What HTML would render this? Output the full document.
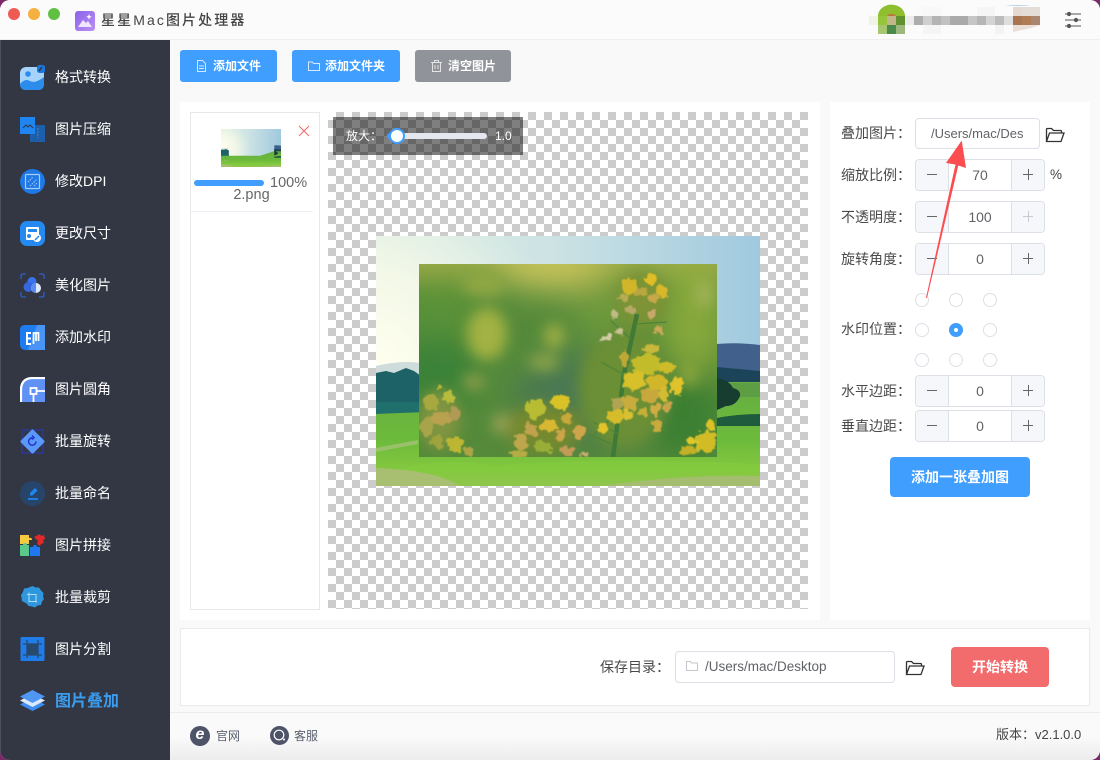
<!DOCTYPE html>
<html lang="zh"><head><meta charset="utf-8"><title>星星Mac图片处理器</title>
<style>
*{box-sizing:border-box;margin:0;padding:0}
html,body{width:1100px;height:760px;overflow:hidden;background:#7a2a6a}
body{font-family:"Liberation Sans","Noto Sans CJK SC",sans-serif;position:relative}
.a{position:absolute}
#win{position:absolute;left:0;top:0;width:1100px;height:760px;background:#f9f9f9;border-radius:10px;overflow:hidden}
#tb{left:0;top:0;width:1100px;height:40px;background:#fbfbfb;border-bottom:1px solid #efefef}
.dot{position:absolute;top:8px;width:12px;height:12px;border-radius:50%}
#side{left:0;top:40px;width:170px;height:720px;background:#333744}
.it{position:absolute;left:55px;font-size:14px;line-height:20px;color:#fff;white-space:nowrap}
.ic{position:absolute;left:20px;width:25px;height:25px}
.btn{position:absolute;top:50px;height:32px;border-radius:3px;background:#409eff;color:#fff;font-size:12px;font-weight:700;line-height:32px;white-space:nowrap}
.btn svg{position:absolute;top:10px;left:16px}
.btn span{position:absolute;top:0}
.lab{position:absolute;left:841px;font-size:14px;line-height:20px;color:#4a4a4a;white-space:nowrap}
.num{position:absolute;left:915px;width:130px;height:32px;border:1px solid #dcdfe6;border-radius:4px;background:#fff;font-size:14px;color:#606266;text-align:center;line-height:30px}
.num i{position:absolute;top:0;width:33px;height:30px;background:#f5f7fa;font-style:normal}
.num i.l{left:0;border-right:1px solid #dcdfe6;border-radius:3px 0 0 3px}
.num i.r{right:0;border-left:1px solid #dcdfe6;border-radius:0 3px 3px 0}
.num i:before{content:"";position:absolute;left:11px;top:14px;width:10px;height:1px;background:#666}
.num i.r:after{content:"";position:absolute;left:16px;top:9px;width:1px;height:11px;background:#666}
.num i.d:before,.num i.d:after{background:#c8cbd2}
.rd{position:absolute;width:14px;height:14px;border-radius:50%;border:1px solid #dcdfe6;background:#fff}
.rd.on{background:#409eff;border-color:#409eff}
.rd.on:after{content:"";position:absolute;left:4px;top:4px;width:4px;height:4px;border-radius:50%;background:#fff}
#chk{left:328px;top:112px;width:480px;height:497px;background-color:#fff;background-image:conic-gradient(#ccc 25%,#fff 0 50%,#ccc 0 75%,#fff 0);background-size:16px 16px}
</style></head><body>
<div id="win">
<div class="a" id="tb"></div>
<div class="dot" style="left:8px;background:#ee5b55"></div>
<div class="dot" style="left:28px;background:#f4b040"></div>
<div class="dot" style="left:48px;background:#5fc042"></div>
<svg class="a" style="left:75px;top:11px" width="20" height="20" viewBox="0 0 20 20"><defs><linearGradient id="lg" x1="0" y1="0" x2="1" y2="1"><stop offset="0" stop-color="#8a62ea"/><stop offset="1" stop-color="#bb90f3"/></linearGradient></defs><rect width="20" height="20" rx="3" fill="url(#lg)"/><path d="M3 16l5-7 3 3 2-2 4 6z" fill="#efe6fd"/><path d="M14 3l.8 2 2 .8-2 .8-.8 2-.8-2-2-.8 2-.8z" fill="#fff"/></svg>
<div class="a" style="left:101px;top:10px;font-size:14px;line-height:20px;font-weight:500;color:#444;letter-spacing:2.1px;white-space:nowrap">星星Mac图片处理器</div>
<svg class="a" style="left:868px;top:4px" width="190" height="34" viewBox="868 4 190 34">
<path d="M878 16a13 11 0 0 1 27 0z" fill="#8fbf2e"/><rect x="887" y="16" width="9" height="9" fill="#c2b78a"/><rect x="878" y="16" width="9" height="9" fill="#96c43a"/><rect x="896" y="16" width="9" height="9" fill="#62912f"/><rect x="878" y="25" width="9" height="9" fill="#a6c670"/><rect x="887" y="25" width="9" height="9" fill="#4c8a4c"/><rect x="896" y="25" width="9" height="9" fill="#9db87e"/><rect x="869" y="16" width="9" height="9" fill="#f0f3e6"/><path d="M887 16a5 4 0 0 1 9 0z" fill="#b97a3c"/>
<g>
<rect x="905" y="16" width="9" height="9" fill="#ececec"/><rect x="914" y="16" width="9" height="9" fill="#adadad"/><rect x="923" y="16" width="9" height="9" fill="#cfcfcf"/><rect x="932" y="16" width="9" height="9" fill="#b4b4b4"/><rect x="941" y="16" width="9" height="9" fill="#c2c2c2"/><rect x="950" y="16" width="18" height="9" fill="#aaa"/><rect x="968" y="16" width="9" height="9" fill="#c6c6c6"/><rect x="977" y="16" width="9" height="9" fill="#b6b6b6"/><rect x="986" y="16" width="9" height="9" fill="#d4d4d4"/><rect x="995" y="16" width="9" height="9" fill="#bcbcbc"/><rect x="1004" y="16" width="9" height="9" fill="#dedede"/>
<rect x="914" y="7" width="9" height="9" fill="#fafafa"/><rect x="923" y="7" width="18" height="9" fill="#f8f8f8"/><rect x="977" y="7" width="18" height="9" fill="#f5f5f5"/>
<rect x="923" y="25" width="18" height="9" fill="#f5f5f5"/><rect x="995" y="25" width="9" height="9" fill="#f3f3f3"/>
<rect x="1013" y="16" width="9" height="9" fill="#a9744f"/><rect x="1022" y="16" width="9" height="9" fill="#b07c55"/><rect x="1031" y="16" width="9" height="9" fill="#aa8570"/>
<rect x="1013" y="7" width="9" height="9" fill="#e4d8d0"/><rect x="1022" y="7" width="18" height="9" fill="#e4dcd6"/>
<path d="M1013 25h27l-9 3-18 4z" fill="#e9dfd8"/><path d="M1005 6q14-2 26 0z" fill="#b4d0e8"/>
</g></svg>
<svg class="a" style="left:1063px;top:11px" width="20" height="18" viewBox="0 0 20 18" fill="none" stroke="#555" stroke-width="1"><path d="M2 3h16M2 9h16M2 15h16"/><circle cx="6" cy="3" r="1.6" fill="#555"/><circle cx="13" cy="9" r="1.6" fill="#555"/><circle cx="6" cy="15" r="1.6" fill="#555"/></svg>

<div class="a" id="side"></div>
<div class="a" style="left:0;top:40px;width:1px;height:720px;background:#50505c"></div>

<svg class="ic" style="top:65px" viewBox="0 0 25 25"><rect y="2" width="24" height="23" rx="6" fill="#a6d3fb"/><circle cx="8" cy="9" r="2.8" fill="#2b8ceb"/><path d="M0 19q5-6 10-3t14-4v7q0 6-6 6H6q-6 0-6-6z" fill="#2b8ceb"/><rect x="17" y="0" width="8" height="8" rx="2.5" fill="#1a78dc"/><path d="M19 6l3-4" stroke="#333744" stroke-width="1.6"/></svg>
<svg class="ic" style="top:117px" viewBox="0 0 25 25"><rect x="10" y="8" width="15" height="17" fill="#1c5fa8"/><rect width="15" height="17" fill="#1f85f0"/><path d="M3 11l3-3 2 2 2-2 3 3" stroke="#333744" stroke-width="1" fill="none"/><path d="M18 11v10" stroke="#2f74bd" stroke-width="2" stroke-dasharray="2 1"/></svg>
<svg class="ic" style="top:169px" viewBox="0 0 25 25"><circle cx="12.500" cy="12.500" r="12.500" fill="#1e78e6"/><rect x="5.500" y="5.500" width="14" height="14" rx="1" fill="none" stroke="#a5cdf8" stroke-width="1.200"/><path d="M8 13l5-5M10 17l7-7M14 17l3-3" stroke="#a5cdf8" stroke-width="1" stroke-dasharray="1.500 1"/></svg>
<svg class="ic" style="top:221px" viewBox="0 0 25 25"><rect width="25" height="25" rx="7" fill="#2489f0"/><rect x="6" y="6" width="13" height="13" rx="1" fill="#fff"/><rect x="8" y="8" width="9" height="3" fill="#2489f0"/><circle cx="9" cy="15" r="2" fill="#2489f0"/><circle cx="17" cy="17" r="4" fill="#fff"/><path d="M15 19l4-4" stroke="#2489f0" stroke-width="1.500"/></svg>
<svg class="ic" style="top:273px" viewBox="0 0 25 25"><path d="M1 6V3q0-2 2-2h3M19 1h3q2 0 2 2v3M24 19v3q0 2-2 2h-3M6 24H3q-2 0-2-2v-3" fill="none" stroke="#2f5fd0" stroke-width="1.300"/><circle cx="12" cy="8.500" r="4.500" fill="#3a72ee"/><circle cx="8.500" cy="14" r="5" fill="#3566dc"/><circle cx="16" cy="15" r="5" fill="#dfe9fb"/><path d="M16 10a5 5 0 0 0 0 10z" fill="#5b8df0"/></svg>
<svg class="ic" style="top:325px" viewBox="0 0 25 25"><path d="M5 0h20v19q0 6-6 6H6q-6 0-6-6V5q0-5 5-5z" fill="#1f7cf0"/><path d="M17 0h8v25H8z" fill="#4a94f5"/><path d="M11 8H7v11h4M7 13.500h4" stroke="#fff" stroke-width="2" fill="none"/><path d="M13.500 19V8h5v8M16 8v8" stroke="#fff" stroke-width="1.700" fill="none"/></svg>
<svg class="ic" style="top:377px" viewBox="0 0 25 25"><path d="M0 25V13Q0 0 13 0h12v25z" fill="#5f92f4"/><path d="M1 25V13Q1 1 13 1h12" fill="none" stroke="#fff" stroke-width="2.200"/><rect x="10.500" y="11" width="6" height="6" fill="#5f92f4" stroke="#fff" stroke-width="1.800"/><path d="M17 14h8M13.500 17v8" stroke="#fff" stroke-width="1.800"/></svg>
<svg class="ic" style="top:429px" viewBox="0 0 25 25"><rect x="2" y="1" width="21" height="23" fill="none" stroke="#2a3bd8" stroke-width=".8"/><path d="M12.500 2L23 12.500 12.500 23 2 12.500z" fill="#5a98fb" stroke="#5a98fb" stroke-width="3" stroke-linejoin="round"/><path d="M16 12.500a3.700 3.700 0 1 1-3.700-3.700M12 6.500l2 2.300-2.300 1.700" fill="none" stroke="#2136c8" stroke-width="1.500"/></svg>
<svg class="ic" style="top:481px" viewBox="0 0 25 25"><circle cx="12.500" cy="12.500" r="12.500" fill="#27456b"/><path d="M8 18h10" stroke="#1f85f0" stroke-width="1.800"/><path d="M10 14.500V12l5-5 2.500 2.500-5 5z" fill="#1f85f0"/></svg>
<svg class="ic" style="top:533px" viewBox="0 0 25 25"><path d="M0 2h9v3a2 2 0 0 1 3 2h-3v4H0z" fill="#f7cb40"/><path d="M0 12h3a2 2 0 0 1 4 0h2v11H1q-1 0-1-1z" fill="#5bc98a"/><path d="M10 14h3a2 2 0 0 1 4 0h3v9h-10z" fill="#1f78f0"/><path d="M14 4l6-3 1 2 3-1 1 4-2 1 1 3-3 1-1 2-3-2 1-3-2-2z" fill="#e02a2a"/></svg>
<svg class="ic" style="top:585px" viewBox="0 0 25 25"><path d="M12.500 1l3 1.500 3.500 0 2 3 2.500 2.500-.5 3.500 1 2.500-2 2.500-1 3.500-3.500.5-2.500 2-3-1-3.500-.5-2-2.500L2 16l-.5-3.500L1 10l2-3 1-3.500 3.500-.5z" fill="#2f97de"/><path d="M9 7.500v9h8M7 9.500h9v8" fill="none" stroke="#b5dcf6" stroke-width="1"/></svg>
<svg class="ic" style="top:637px" viewBox="0 0 25 25"><rect x=".5" width="24" height="24" rx="1" fill="#1f7ce8"/><path d="M7 3v18M18 3v18M3 7h19M3 18h19" stroke="#27496e" stroke-width="1.300"/><rect x="7" y="7" width="11" height="11" fill="#27496e"/></svg>
<svg class="ic" style="top:689px" viewBox="0 0 25 25"><path d="M12.500 9L25 15.500 12.500 22 0 15.500z" fill="#3f8df0"/><path d="M12.500 5L25 11.500 12.500 18 0 11.500z" fill="#dce9fb"/><path d="M12.500 1L25 7.500 12.500 14 0 7.500z" fill="#4f97f3"/></svg>

<div class="it" style="top:67px">格式转换</div>
<div class="it" style="top:119px">图片压缩</div>
<div class="it" style="top:171px">修改DPI</div>
<div class="it" style="top:223px">更改尺寸</div>
<div class="it" style="top:275px">美化图片</div>
<div class="it" style="top:327px">添加水印</div>
<div class="it" style="top:379px">图片圆角</div>
<div class="it" style="top:431px">批量旋转</div>
<div class="it" style="top:483px">批量命名</div>
<div class="it" style="top:535px">图片拼接</div>
<div class="it" style="top:587px">批量裁剪</div>
<div class="it" style="top:639px">图片分割</div>
<div class="it" style="top:692px;font-size:16px;font-weight:700;color:#3b9df0">图片叠加</div>

<div class="btn" style="left:180px;width:97px"><svg width="11" height="12" viewBox="0 0 11 12" fill="none" stroke="#d5e8ff" stroke-width="1"><path d="M1.500.5h5l3 3v8h-8zM3 6h5M3 8.500h5"/></svg><span style="left:33px">添加文件</span></div>
<div class="btn" style="left:292px;width:108px"><svg width="12" height="12" viewBox="0 0 12 12" fill="none" stroke="#d5e8ff" stroke-width="1"><path d="M.5 2h4l1 1.500h6v7h-11z"/></svg><span style="left:33px">添加文件夹</span></div>
<div class="btn" style="left:415px;width:96px;background:#909399"><svg width="11" height="12" viewBox="0 0 11 12" fill="none" stroke="#e4e4e6" stroke-width="1"><path d="M0 2.500h11M3.500 2.500V.5h4v2M1.500 2.500v9h8v-9M4 5v4M7 5v4"/></svg><span style="left:33px">清空图片</span></div>

<div class="a" style="left:180px;top:102px;width:640px;height:518px;background:#fff"></div>
<div class="a" style="left:830px;top:102px;width:260px;height:518px;background:#fff"></div>
<div class="a" style="left:190px;top:112px;width:130px;height:498px;background:#fff;border:1px solid #e8e8e8"></div>

<svg class="a" style="left:221px;top:129px" width="60" height="38" viewBox="0 0 384 250" preserveAspectRatio="none"><use href="#land"/></svg>
<svg class="a" style="left:298px;top:125px" width="12" height="12" viewBox="0 0 12 12"><path d="M1 1l10 10M11 1L1 11" stroke="#f56c6c" stroke-width="1.100"/></svg>
<div class="a" style="left:194px;top:180px;width:70px;height:6px;border-radius:3px;background:#409eff"></div>
<div class="a" style="left:270px;top:175px;font-size:14.500px;line-height:16px;color:#666">100%</div>
<div class="a" style="left:191px;width:128px;top:187px;font-size:14.500px;line-height:17px;color:#666;text-align:center;padding-right:7px">2.png</div>
<div class="a" style="left:191px;top:211px;width:122px;height:1px;background:#ebeef5"></div>

<div class="a" id="chk"></div>
<svg class="a" style="left:376px;top:236px" width="384" height="250" viewBox="0 0 384 250">
<defs>
<linearGradient id="sky" x1="0" y1="0" x2="1" y2="0"><stop offset="0" stop-color="#dcefe4"/><stop offset=".45" stop-color="#cde3e4"/><stop offset="1" stop-color="#a0c9df"/></linearGradient>
<radialGradient id="sun" gradientUnits="userSpaceOnUse" cx="0" cy="130" r="190"><stop offset="0" stop-color="#fffff0"/><stop offset=".5" stop-color="#fbfbe8" stop-opacity=".75"/><stop offset="1" stop-color="#f0f6e8" stop-opacity="0"/></radialGradient>
<linearGradient id="gr" x1="0" y1="0" x2="0" y2="1"><stop offset="0" stop-color="#66ad42"/><stop offset=".55" stop-color="#6cba3c"/><stop offset=".85" stop-color="#84c83e"/><stop offset="1" stop-color="#a0bc60"/></linearGradient>
<filter id="b1" x="-40%" y="-40%" width="180%" height="180%"><feGaussianBlur stdDeviation="16"/></filter>
<filter id="b2" x="-40%" y="-40%" width="180%" height="180%"><feGaussianBlur stdDeviation="7"/></filter>
<filter id="fl" x="-5%" y="-5%" width="110%" height="110%"><feTurbulence type="fractalNoise" baseFrequency=".16" numOctaves="2" seed="4" result="n"/><feDisplacementMap in="SourceGraphic" in2="n" scale="9" xChannelSelector="R" yChannelSelector="G"/><feGaussianBlur stdDeviation=".5"/></filter>
<g id="land">
<rect width="384" height="250" fill="url(#sky)"/>
<rect width="384" height="250" fill="url(#sun)"/>
<path d="M0 130q25-6 45-3v20H0z" fill="#cfdcdc"/>
<path d="M341 108q20-2 43 1v40h-43z" fill="#41608c"/>
<path d="M341 131l43 4v14h-43z" fill="#1c4458"/>
<path d="M0 137l10-2 8 2 12-5 8 3 7 5 5-1v40H0z" fill="#1d6266"/>
<path d="M0 166h50v14H0z" fill="#1f6f6c"/>
<path d="M0 178l50-2h200l90-30h44v104H0z" fill="url(#gr)"/>
<path d="M341 147h43v14h-43z" fill="#5d9e44"/>
<path d="M341 182q20-4 43-4v12h-43z" fill="#1f5c3e"/>
<path d="M341 142q12 2 16 10 8 2 7 8-4 10-14 10l-9 4z" fill="#173c30"/>
<path d="M0 212l42-8v4L0 216z" fill="#a3c274" opacity=".8"/>
<path d="M0 240q60-22 120-10 100-10 264-2v22H0z" fill="#84cc3e" opacity=".55"/>
<path d="M0 232q60 2 84 18H0z" fill="#a8bf72"/>
<path d="M225 250q80-12 159-10v10z" fill="#a5bd6e"/>
</g>
</defs>
<use href="#land"/>
<svg x="43" y="28" width="298" height="193" viewBox="0 0 298 193">
<rect width="298" height="193" fill="#558a3a"/>
<g filter="url(#b1)">
<rect x="-30" y="-30" width="360" height="40" fill="#a8b24c"/>
<ellipse cx="135" cy="4" rx="60" ry="22" fill="#c8c45a"/>
<ellipse cx="20" cy="45" rx="40" ry="40" fill="#5a9238"/>
<ellipse cx="15" cy="110" rx="45" ry="40" fill="#3b8238"/>
<ellipse cx="170" cy="135" rx="75" ry="45" fill="#4a7852"/>
<ellipse cx="275" cy="55" rx="34" ry="60" fill="#86a83a"/>
<ellipse cx="265" cy="150" rx="36" ry="45" fill="#3a7f30"/>
<ellipse cx="185" cy="45" rx="30" ry="36" fill="#6e9a3c"/>
</g>
<g filter="url(#b2)">
<ellipse cx="68" cy="70" rx="20" ry="26" fill="#a3b243"/>
<ellipse cx="65" cy="20" rx="22" ry="12" fill="#8fa842"/>
<ellipse cx="135" cy="72" rx="10" ry="12" fill="#a0b044"/>
<ellipse cx="125" cy="98" rx="16" ry="8" fill="#8ea548"/>
<ellipse cx="55" cy="118" rx="12" ry="8" fill="#8d9e4a"/>
<ellipse cx="20" cy="155" rx="22" ry="30" fill="#7f9440"/>
<ellipse cx="85" cy="160" rx="12" ry="10" fill="#9ba356"/>
<ellipse cx="285" cy="30" rx="8" ry="14" fill="#a5b45a"/>
<ellipse cx="270" cy="110" rx="8" ry="12" fill="#8ea83e"/>
<ellipse cx="205" cy="125" rx="46" ry="60" fill="#6b8f34"/>
<ellipse cx="222" cy="35" rx="26" ry="28" fill="#7d9336"/>
<ellipse cx="125" cy="165" rx="38" ry="26" fill="#75892f"/>
</g>
<path d="M218 50L205 110 194 193" stroke="#3f7a36" stroke-width="4.500" fill="none"/>
<path d="M204 110l-22-12M196 150l-20 20M200 170l-26-12M212 75l-20-18M216 60l32-2M208 100l30-18" stroke="#4e8438" stroke-width="1.200" fill="none"/>
<path d="M170 170l22 10" stroke="#4e8438" stroke-width="1.500"/>
<g filter="url(#fl)">
<ellipse cx="210" cy="22" rx="8" ry="8" fill="#d2b62c"/><ellipse cx="232" cy="14" rx="6" ry="6" fill="#e0be28"/><ellipse cx="243" cy="27" rx="6" ry="6" fill="#d8b82a"/><ellipse cx="222" cy="28" rx="7" ry="5" fill="#b8a640"/><ellipse cx="234" cy="34" rx="6" ry="4" fill="#c8a848"/>
<ellipse cx="205" cy="34" rx="5" ry="4" fill="#b8ac52"/>
<ellipse cx="212" cy="46" rx="6" ry="4" fill="#b6a968"/><ellipse cx="195" cy="50" rx="4" ry="5" fill="#c2ba84"/><ellipse cx="232" cy="50" rx="4" ry="5" fill="#c8a86a"/>
<ellipse cx="187" cy="74" rx="5" ry="3" fill="#d0cca4"/><ellipse cx="200" cy="68" rx="3" ry="4" fill="#c8c090"/><ellipse cx="240" cy="66" rx="4" ry="5" fill="#cca85a"/>
<ellipse cx="232" cy="85" rx="8" ry="5" fill="#c8b83a"/><ellipse cx="205" cy="95" rx="5" ry="8" fill="#c0a838"/>
<ellipse cx="228" cy="100" rx="15" ry="10" fill="#c3bc2a"/><ellipse cx="248" cy="104" rx="7" ry="7" fill="#cdbb2c"/><ellipse cx="215" cy="116" rx="11" ry="10" fill="#d8c02c"/><ellipse cx="238" cy="118" rx="11" ry="8" fill="#d2b62a"/><ellipse cx="258" cy="122" rx="6" ry="10" fill="#e0c22a"/>
<ellipse cx="230" cy="132" rx="9" ry="8" fill="#c8a83c"/><ellipse cx="244" cy="130" rx="6" ry="7" fill="#d4bc30"/><ellipse cx="210" cy="138" rx="9" ry="7" fill="#c8ac3c"/><ellipse cx="198" cy="140" rx="5" ry="7" fill="#b0a452"/>
<ellipse cx="196" cy="153" rx="8" ry="7" fill="#d6bc2a"/><ellipse cx="208" cy="150" rx="5" ry="6" fill="#d8c030"/><ellipse cx="184" cy="164" rx="6" ry="5" fill="#e2c42a"/><ellipse cx="223" cy="148" rx="5" ry="4" fill="#c8b038"/><ellipse cx="236" cy="146" rx="5" ry="6" fill="#d0ac44"/><ellipse cx="248" cy="142" rx="5" ry="5" fill="#c8a44a"/><ellipse cx="238" cy="162" rx="5" ry="6" fill="#c8aa3c"/>
<ellipse cx="141" cy="138" rx="10" ry="7" fill="#d8c228"/><ellipse cx="116" cy="145" rx="10" ry="10" fill="#b8bc30"/><ellipse cx="148" cy="154" rx="6" ry="6" fill="#c8a83a"/><ellipse cx="160" cy="168" rx="6" ry="7" fill="#cfa548"/><ellipse cx="130" cy="162" rx="9" ry="6" fill="#d8b830"/><ellipse cx="112" cy="166" rx="7" ry="7" fill="#c0a24e"/><ellipse cx="142" cy="172" rx="6" ry="6" fill="#cca54a"/><ellipse cx="124" cy="183" rx="9" ry="6" fill="#98ae38"/><ellipse cx="102" cy="178" rx="7" ry="8" fill="#bda64c"/><ellipse cx="100" cy="190" rx="9" ry="4" fill="#b4ac44"/><ellipse cx="148" cy="187" rx="6" ry="5" fill="#c49a58"/><ellipse cx="165" cy="191" rx="5" ry="3" fill="#c8ac70"/>
<ellipse cx="21" cy="124" rx="3" ry="3" fill="#b8b838"/><ellipse cx="30" cy="133" rx="6" ry="6" fill="#b8bc3c"/><ellipse cx="12" cy="138" rx="8" ry="8" fill="#a8a840"/><ellipse cx="22" cy="154" rx="10" ry="7" fill="#b8a250"/><ellipse cx="36" cy="150" rx="5" ry="8" fill="#b09a54"/><ellipse cx="8" cy="162" rx="7" ry="9" fill="#a8a44a"/><ellipse cx="36" cy="180" rx="8" ry="9" fill="#bcb632"/><ellipse cx="18" cy="178" rx="6" ry="6" fill="#9fa23c"/><ellipse cx="50" cy="188" rx="5" ry="5" fill="#aca444"/>
<ellipse cx="287" cy="178" rx="11" ry="11" fill="#d2bc26"/><ellipse cx="270" cy="187" rx="9" ry="5" fill="#c4b028"/><ellipse cx="292" cy="162" rx="5" ry="5" fill="#dcc026"/><ellipse cx="272" cy="177" rx="6" ry="3" fill="#e0c82a"/>
</g>
</svg>
</svg>

<div class="a" style="left:333px;top:117px;width:190px;height:38px;background:rgba(0,0,0,.5)"></div>
<div class="a" style="left:346px;top:126px;font-size:12px;line-height:20px;color:#fff;white-space:nowrap">放大：</div>
<div class="a" style="left:389px;top:133px;width:98px;height:6px;border-radius:3px;background:#e4e7ed"></div>
<div class="a" style="left:387px;top:133px;width:8px;height:6px;border-radius:3px;background:#409eff"></div>
<div class="a" style="left:389px;top:128px;width:16px;height:16px;border-radius:50%;background:#fff;border:2px solid #409eff"></div>
<div class="a" style="left:495px;top:126px;font-size:12px;line-height:20px;color:#fff">1.0</div>

<div class="lab" style="top:123px">叠加图片：</div>
<div class="a" style="left:915px;top:118px;width:125px;height:31px;border:1px solid #dcdfe6;border-radius:4px;background:#fff;font-size:13px;line-height:29px;color:#606266;padding-left:15px;overflow:hidden;white-space:nowrap">/Users/mac/Des</div>
<svg class="a" style="left:1045px;top:127px" width="20" height="16" viewBox="0 0 20 16" fill="none" stroke="#333" stroke-width="1.300"><path d="M1.500 14.500V2.500q0-1 1-1h4l2 2h7q1 0 1 1V6M1.500 14.500l3-8.500h14.500l-3 8.500z"/></svg>

<div class="lab" style="top:165px">缩放比例：</div>
<div class="num" style="top:159px"><i class="l"></i>70<i class="r"></i></div>
<div class="a" style="left:1050px;top:166px;font-size:13.500px;line-height:18px;color:#444">%</div>
<div class="lab" style="top:207px">不透明度：</div>
<div class="num" style="top:201px"><i class="l"></i>100<i class="r d"></i></div>
<div class="lab" style="top:249px">旋转角度：</div>
<div class="num" style="top:243px"><i class="l"></i>0<i class="r"></i></div>
<div class="rd" style="left:915px;top:293px"></div><div class="rd" style="left:949px;top:293px"></div><div class="rd" style="left:983px;top:293px"></div>
<div class="rd" style="left:915px;top:323px"></div><div class="rd on" style="left:949px;top:323px"></div><div class="rd" style="left:983px;top:323px"></div>
<div class="rd" style="left:915px;top:353px"></div><div class="rd" style="left:949px;top:353px"></div><div class="rd" style="left:983px;top:353px"></div>
<div class="lab" style="top:319px">水印位置：</div>
<div class="lab" style="top:381px">水平边距：</div>
<div class="num" style="top:375px"><i class="l"></i>0<i class="r"></i></div>
<div class="lab" style="top:416px">垂直边距：</div>
<div class="num" style="top:410px"><i class="l"></i>0<i class="r"></i></div>
<div class="a" style="left:890px;top:457px;width:140px;height:40px;border-radius:4px;background:#409eff;color:#fff;font-size:14px;font-weight:700;line-height:40px;text-align:center">添加一张叠加图</div>

<svg class="a" style="left:915px;top:130px" width="60" height="180" viewBox="915 130 60 180"><path d="M961.700 140.500L966 168 958.300 165.500 927 298 926 298 955.500 164.500 946 163z" fill="#fb4d50"/></svg>

<div class="a" style="left:180px;top:628px;width:910px;height:78px;background:#fff;border:1px solid #ebebeb"></div>
<div class="a" style="left:600px;top:657px;font-size:14px;line-height:20px;color:#4a4a4a;white-space:nowrap">保存目录：</div>
<div class="a" style="left:675px;top:651px;width:220px;height:32px;border:1px solid #dcdfe6;border-radius:4px;background:#fff;font-size:13.500px;line-height:30px;color:#606266;padding-left:29px;white-space:nowrap">/Users/mac/Desktop</div>
<svg class="a" style="left:686px;top:661px" width="12" height="10" viewBox="0 0 12 10" fill="none" stroke="#c4c7ce"><path d="M.5.500h4l1 1.500h6v7.500H.5z"/></svg>
<svg class="a" style="left:905px;top:660px" width="20" height="16" viewBox="0 0 20 16" fill="none" stroke="#333" stroke-width="1.300"><path d="M1.500 14.500V2.500q0-1 1-1h4l2 2h7q1 0 1 1V6M1.500 14.500l3-8.500h14.500l-3 8.500z"/></svg>
<div class="a" style="left:951px;top:647px;width:98px;height:40px;border-radius:4px;background:#f26c6e;color:#fff;font-size:14px;font-weight:700;line-height:40px;text-align:center">开始转换</div>

<div class="a" style="left:170px;top:712px;width:930px;height:48px;background:linear-gradient(#fafafa 50%,#ececec);border-top:1px solid #ececec"></div>
<div class="a" style="left:190px;top:726px;width:20px;height:20px;border-radius:50%;background:#4d5468;color:#fff;font-size:16px;line-height:17px;font-weight:700;font-style:italic;text-align:center">e</div>
<div class="a" style="left:216px;top:726px;font-size:12px;line-height:20px;color:#5a6070">官网</div>
<svg class="a" style="left:270px;top:726px" width="19" height="19" viewBox="0 0 19 19"><circle cx="9.500" cy="9.500" r="9.500" fill="#4d5468"/><circle cx="9" cy="9" r="4.800" fill="none" stroke="#fff" stroke-width="1.200"/><circle cx="14" cy="13.500" r="1" fill="#fff"/></svg>
<div class="a" style="left:294px;top:726px;font-size:12px;line-height:20px;color:#5a6070">客服</div>
<div class="a" style="left:996px;top:725px;font-size:13px;line-height:20px;color:#444;white-space:nowrap">版本：v2.1.0.0</div>
</div>
</body></html>
